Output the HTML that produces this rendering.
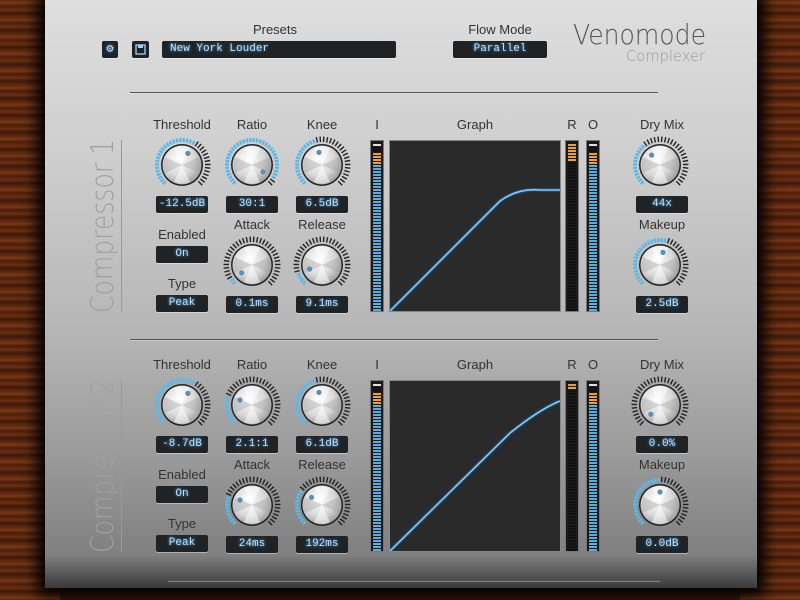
<!DOCTYPE html>
<html><head><meta charset="utf-8">
<style>
*{margin:0;padding:0;box-sizing:border-box}
body{width:800px;height:600px;overflow:hidden;position:relative;background:#3a1a0c;font-family:"Liberation Sans",sans-serif}
.wood{position:absolute;top:0;bottom:0;width:60px;background:repeating-linear-gradient(180deg,#5a2810 0,#7a3818 3px,#4a1e0a 6px,#6b3014 10px,#3e1808 13px,#5c2a12 17px)}
#panel{position:absolute;left:45px;top:0;width:712px;height:588px;background:linear-gradient(180deg,#dedede 0,#cfcfcf 150px,#b6b6b6 330px,#9c9c9c 450px,#808080 555px,#3a3a3a 588px);box-shadow:0 0 14px 8px #000}
.lab{position:absolute;font-size:13px;color:#333;text-align:center;width:100px;margin-left:-50px}
.box{position:absolute;height:17px;background:#1f2326;border-radius:2px;color:#bfe2ff;font:11px "Liberation Mono",monospace;text-align:center;line-height:17px;text-shadow:0 0 3px #59b4ff;box-shadow:0 1px 0 rgba(255,255,255,.4)}
.hr{position:absolute;height:1px;background:#555;box-shadow:0 1px 0 rgba(255,255,255,.3)}
.graph{position:absolute;background:#2a2a2a;border:1px solid #888}
.meter{position:absolute;width:14px;background:#1a1a1a;border:1px solid #777}
</style></head><body>
<div class="wood" style="left:0"></div>
<div class="wood" style="right:0"></div>
<div id="panel"></div>
<div id="c" style="position:absolute;left:0;top:0;width:800px;height:600px"></div>
<script>
var c=document.getElementById('c'),h='';
function lab(t,x,y,s){h+='<div class="lab" style="left:'+x+'px;top:'+y+'px;'+(s||'')+'">'+t+'</div>';}
function box(t,x,y,w){h+='<div class="box" style="left:'+x+'px;top:'+y+'px;width:'+w+'px">'+t+'</div>';}
function knob(x,y,f){
 var s='<svg style="position:absolute;left:'+(x-32)+'px;top:'+(y-32)+'px" width="64" height="64" viewBox="-32 -32 64 64"><defs><radialGradient id="g" cx="40%" cy="35%" r="70%"><stop offset="0" stop-color="#fff"/><stop offset="0.6" stop-color="#d8d8d8"/><stop offset="1" stop-color="#999"/></radialGradient></defs>';
 var n=36;
 for(var i=0;i<n;i++){var a=(-135+270*i/(n-1))*Math.PI/180;var on=i/(n-1)<=f+0.001&&f>0;
  var r1=23,r2=on?27:28.5;
  s+='<line x1="'+(r1*Math.sin(a)).toFixed(1)+'" y1="'+(-r1*Math.cos(a)).toFixed(1)+'" x2="'+(r2*Math.sin(a)).toFixed(1)+'" y2="'+(-r2*Math.cos(a)).toFixed(1)+'" stroke="'+(on?'#5cb8ea':'#222')+'" stroke-width="'+(on?2.4:1.4)+'"/>';}
 s+='<circle r="21" fill="#222"/><circle r="19.5" fill="url(#g)"/>';
 s+='<path d="M0 0 L-8 -17 A19 19 0 0 1 8 -17Z M0 0 L8 17 A19 19 0 0 1 -8 17Z" fill="#fff" opacity=".5"/><path d="M0 0 L17 -8 A19 19 0 0 1 17 8Z M0 0 L-17 8 A19 19 0 0 1 -17 -8Z" fill="#999" opacity=".35"/>';
 var a=(-135+270*f)*Math.PI/180;
 s+='<circle cx="'+(13*Math.sin(a)).toFixed(1)+'" cy="'+(-13*Math.cos(a)).toFixed(1)+'" r="2.6" fill="#5b8fb8"/></svg>';
 h+=s;}
function meter(x,y,top,orange,blue){
 var s='<div class="meter" style="left:'+x+'px;top:'+y+'px;height:172px">';
 var n=56;
 for(var i=0;i<n;i++){var col='#111';
  if(i<top)col='#ddd';else if(i<orange&&i>=orange-4)col='#e9a030';else if(i>=orange)col=blue?'#5aaed8':'#111';
  if(!blue&&i<orange)col='#e9a030';
  s+='<div style="position:absolute;left:2px;width:8px;height:1.5px;top:'+(3+i*3)+'px;background:'+col+'"></div>';}
 h+=s+'</div>';}
function section(o,v,k,path){
 h+='<svg style="position:absolute;left:84px;top:'+(138+o)+'px" width="34" height="178"><text transform="translate(29,175) rotate(-90)" font-family="DejaVu Sans,sans-serif" font-weight="200" font-size="31" fill="#a0a0a0" textLength="174" lengthAdjust="spacingAndGlyphs">Compressor '+(o?2:1)+'</text></svg>';
 h+='<div style="position:absolute;left:121px;top:'+(140+o)+'px;width:1px;height:172px;background:#999"></div>';
 lab('Threshold',182,117+o);lab('Ratio',252,117+o);lab('Knee',322,117+o);
 knob(182,165+o,k[0]);knob(252,165+o,k[1]);knob(322,165+o,k[2]);
 box(v[0],156,196+o,52);box(v[1],226,196+o,52);box(v[2],296,196+o,52);
 lab('Enabled',182,227+o);box('On',156,246+o,52);
 lab('Type',182,276+o);box('Peak',156,295+o,52);
 lab('Attack',252,217+o);lab('Release',322,217+o);
 knob(252,265+o,k[3]);knob(322,265+o,k[4]);
 box(v[3],226,296+o,52);box(v[4],296,296+o,52);
 lab('I',377,117+o);lab('Graph',475,117+o);lab('R',572,117+o);lab('O',593,117+o);
 meter(370,140+o,1,7,true);
 h+='<div class="graph" style="left:389px;top:'+(140+o)+'px;width:172px;height:172px"><svg width="170" height="170"><path d="'+path+'" fill="none" stroke="#1c4a70" stroke-width="4"/><path d="'+path+'" fill="none" stroke="#8cc8f0" stroke-width="1.6"/></svg></div>';
 meter(565,140+o,0,o?2:6,false);
 meter(586,140+o,1,7,true);
 lab('Dry Mix',662,117+o);knob(660,165+o,k[5]);box(v[5],636,196+o,52);
 lab('Makeup',662,217+o);knob(660,265+o,k[6]);box(v[6],636,296+o,52);
}
lab('Presets',275,22);lab('Flow Mode',500,22);
h+='<div class="box" style="left:102px;top:41px;width:16px;font-size:12px">&#9881;</div>';
h+='<div class="box" style="left:132px;top:41px;width:17px"><svg width="11" height="11" style="margin-top:3px"><rect x="1" y="1" width="9" height="9" fill="none" stroke="#9fd4ff" stroke-width="1.3"/><rect x="3" y="1" width="5" height="3" fill="#9fd4ff"/></svg></div>';
h+='<div class="box" style="left:162px;top:41px;width:234px;text-align:left;padding-left:8px">New York Louder</div>';
box('Parallel',453,41,94);
h+='<svg style="position:absolute;left:570px;top:12px" width="150" height="56"><text x="3" y="32" font-family="DejaVu Sans,sans-serif" font-weight="200" font-size="28" fill="#555" textLength="133" lengthAdjust="spacingAndGlyphs">Venomode</text><text x="56" y="49" font-family="DejaVu Sans,sans-serif" font-weight="200" font-size="15" fill="#999" textLength="79" lengthAdjust="spacingAndGlyphs">Complexer</text></svg>';
h+='<div class="hr" style="left:130px;top:92px;width:528px"></div>';
h+='<div class="hr" style="left:130px;top:339px;width:528px"></div>';
h+='<div class="hr" style="left:168px;top:580px;width:492px"></div>';
section(0,['-12.5dB','30:1','6.5dB','0.1ms','9.1ms','44x','2.5dB'],[0.6,0.95,0.45,0.03,0.1,0.35,0.55],'M0 170 L110 60 Q128 47 150 49 L170 49');
section(240,['-8.7dB','2.1:1','6.1dB','24ms','192ms','0.0%','0.0dB'],[0.6,0.25,0.45,0.25,0.3,0,0.5],'M0 170 L120 52 Q150 28 170 20');
c.innerHTML=h;
</script>
</body></html>
